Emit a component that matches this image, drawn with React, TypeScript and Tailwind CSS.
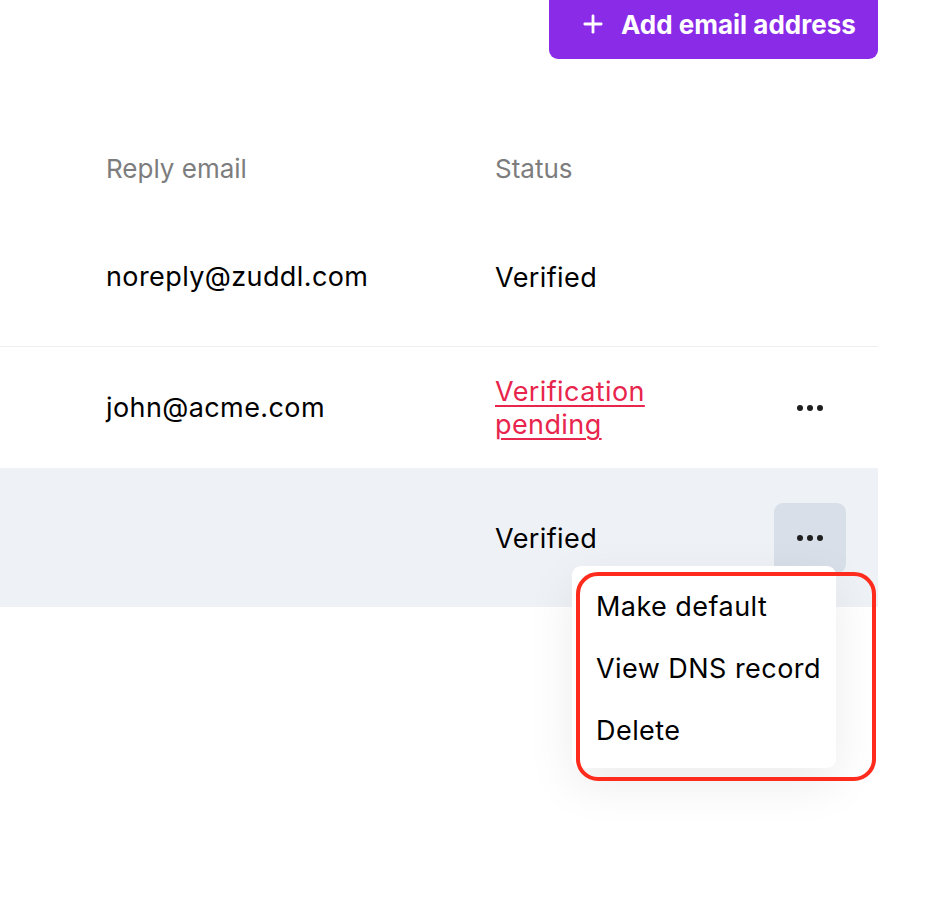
import { Plus } from 'lucide-react';

type Row = {
  email: string;
  status: 'verified' | 'pending';
  actions: boolean;
  height: string;
  highlighted?: boolean;
  border?: boolean;
};

const ROWS: Row[] = [
  { email: 'noreply@zuddl.com', status: 'verified', actions: false, height: 'h-[139px]', border: true },
  { email: 'john@acme.com', status: 'pending', actions: true, height: 'h-[121px]' },
  { email: '', status: 'verified', actions: true, height: 'h-[139px]', highlighted: true },
];

function Dots() {
  return (
    <span className="flex items-center gap-[4px]">
      <span className="h-[6px] w-[6px] rounded-full bg-[#1f1f1f]" />
      <span className="h-[6px] w-[6px] rounded-full bg-[#1f1f1f]" />
      <span className="h-[6px] w-[6px] rounded-full bg-[#1f1f1f]" />
    </span>
  );
}

export default function App() {
  return (
    <div
      className="relative min-h-[902px] w-[940px] overflow-hidden bg-white text-[26px] text-black"
      style={{ fontFamily: 'Inter, "Noto Sans", sans-serif' }}
    >
      <div className="w-[878px]">
        {/* Top action */}
        <div className="flex justify-end">
          <button className="-mt-[11px] flex h-[70px] w-[329px] items-center gap-[14px] rounded-[9px] bg-[#8a2be8] pl-[30px] font-bold text-white">
            <Plus className="h-[28px] w-[28px]" strokeWidth={2.4} />
            <span>Add email address</span>
          </button>
        </div>

        {/* Header */}
        <div className="flex h-[149px] items-center pt-[69px] text-[#7d7d7d]">
          <div className="w-[495px] pl-[106px]">Reply email</div>
          <div>Status</div>
        </div>

        {/* Rows */}
        {ROWS.map((row, i) => (
          <div
            key={i}
            className={`flex items-center text-[27px] tracking-[0.4px] ${row.height} ${
              row.highlighted ? 'bg-[#eef1f6]' : ''
            } ${row.border ? 'border-b border-[#eceef2]' : ''}`}
          >
            <div className="w-[495px] pl-[106px] pt-[1px]">{row.email}</div>
            <div className="w-[279px] pt-[1px] leading-[33px]">
              {row.status === 'verified' ? (
                'Verified'
              ) : (
                <a className="block w-[175px] text-[#e8254c] underline decoration-[2px] underline-offset-[4px]">
                  Verification pending
                </a>
              )}
            </div>
            {row.actions && (
              <button
                className={`flex h-[70px] w-[72px] items-center justify-center rounded-[9px] ${
                  row.highlighted ? 'bg-[#d8dfe8]' : ''
                }`}
              >
                <Dots />
              </button>
            )}
          </div>
        ))}
      </div>

      {/* Dropdown menu */}
      <div className="absolute left-[572px] top-[566px] w-[264px] rounded-[9px] bg-white pb-[6px] pt-[10px] text-[27px] tracking-[0.45px] shadow-[0_16px_48px_rgba(0,0,0,0.08)]">
        {['Make default', 'View DNS record', 'Delete'].map((item) => (
          <div key={item} className="flex h-[62px] items-center pl-[24px]">
            {item}
          </div>
        ))}
      </div>

      {/* Annotation highlight */}
      <div className="pointer-events-none absolute left-[576px] top-[572px] h-[209px] w-[300px] rounded-[22px] border-[4px] border-[#ff2b1c]" />
    </div>
  );
}
